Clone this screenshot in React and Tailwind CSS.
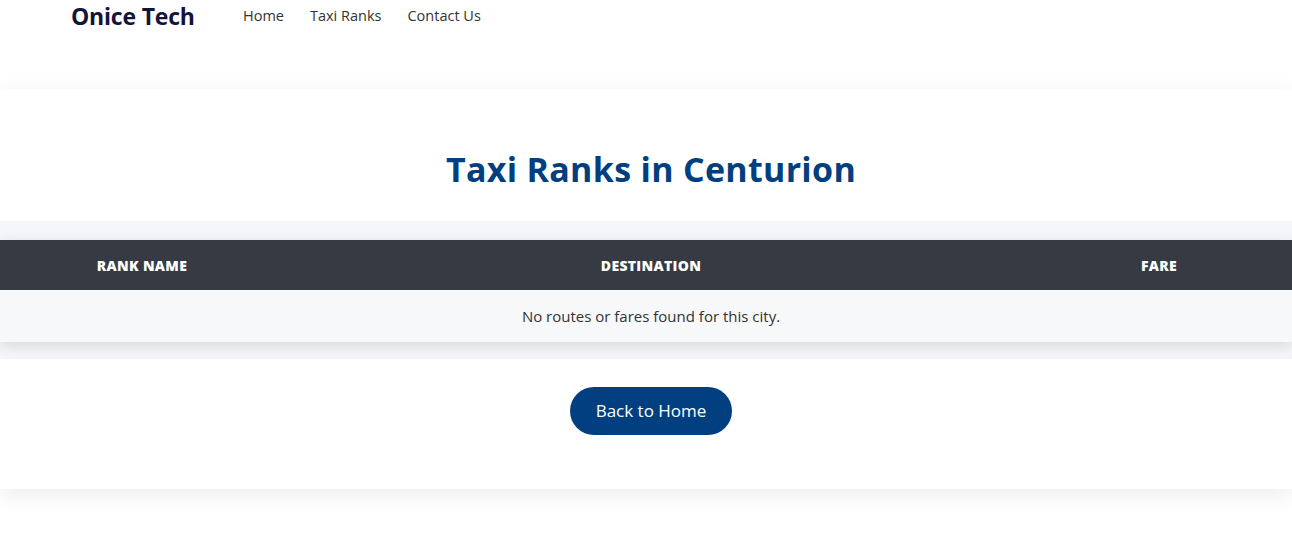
export default function App() {
  const font = { fontFamily: '"Open Sans", "Liberation Sans", sans-serif' };

  return (
    <div className="min-h-screen bg-white text-[#333]" style={font}>
      <header className="flex h-[32px] items-center pl-[71px]">
        <span className="w-[172px] text-[23px] font-bold tracking-[-0.2px] text-[#14143a]">Onice Tech</span>
        <nav className="flex items-center gap-[26px] text-[14.5px] text-[#333]">
          <a href="#">Home</a>
          <a href="#">Taxi Ranks</a>
          <a href="#">Contact Us</a>
        </nav>
      </header>

      <main className="mt-[57px] bg-white shadow-[0_6px_22px_rgba(0,0,0,0.08)]">
        <h1 className="pt-[61px] pb-[33px] pl-[10px] text-center text-[34px] font-bold leading-[38px] tracking-[0.3px] text-[#023f7f]">
          Taxi Ranks in Centurion
        </h1>

        <div className="overflow-hidden bg-[#f5f6fa] pt-[19px] pb-[17px]">
          <div className="shadow-[0_4px_14px_rgba(0,0,0,0.12)]">
            <div className="grid h-[50px] grid-cols-[284px_1fr_266px] items-center bg-[#363a42] text-[14px] font-extrabold uppercase tracking-[0.3px] text-white">
              <div className="text-center">Rank Name</div>
              <div className="pr-[8px] text-center">Destination</div>
              <div className="text-center">Fare</div>
            </div>
            <div className="flex h-[52px] items-center justify-center bg-[#f7f8fa] pl-[10px] text-[15px] text-[#333]">
              No routes or fares found for this city.
            </div>
          </div>
        </div>

        <div className="flex justify-center pt-[28px] pb-[54px] pl-[10px]">
          <button className="h-[48px] w-[162px] rounded-full bg-[#023f80] text-[17px] text-white">
            Back to Home
          </button>
        </div>
      </main>
    </div>
  );
}
